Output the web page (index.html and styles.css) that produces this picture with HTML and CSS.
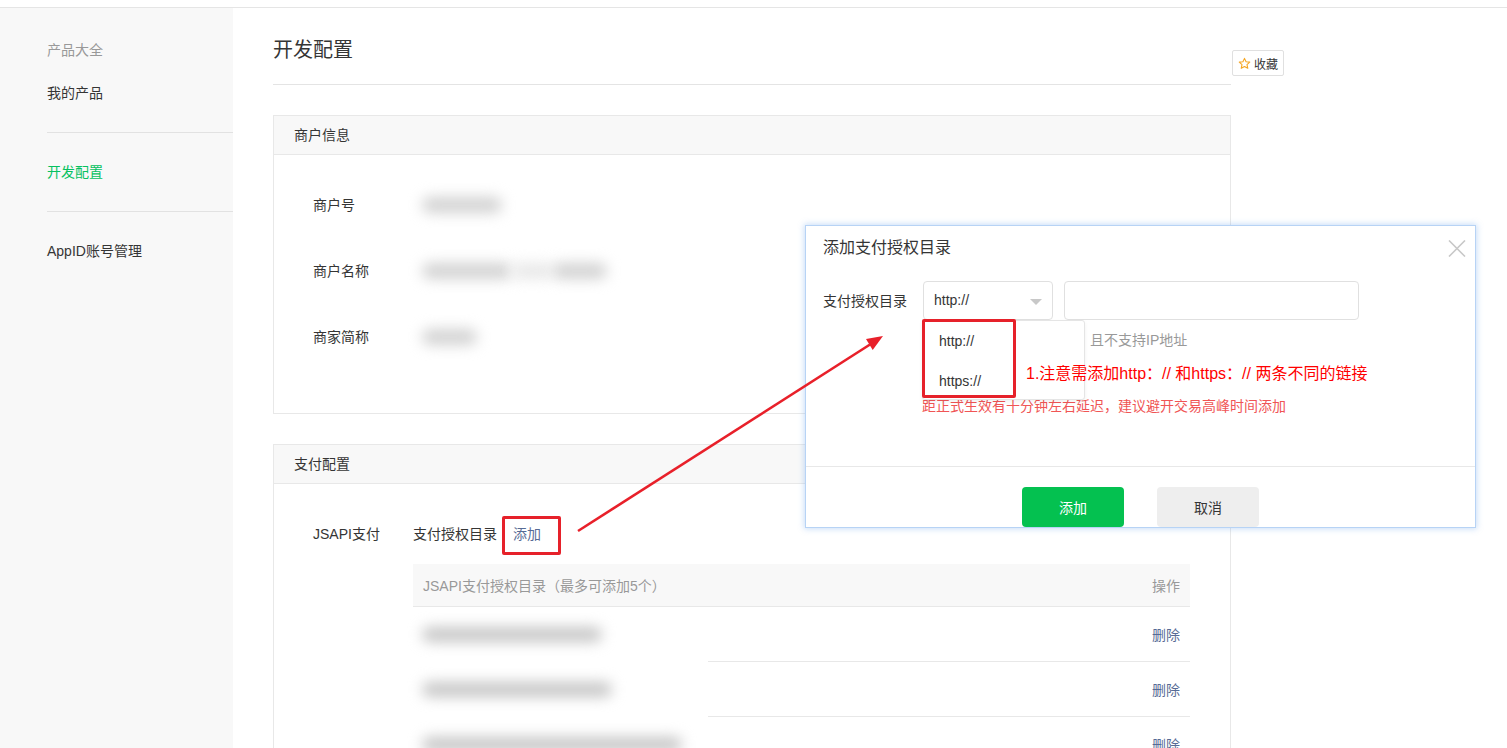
FILE: index.html
```html
<!DOCTYPE html>
<html lang="zh-CN">
<head>
<meta charset="utf-8">
<title>开发配置</title>
<link rel="stylesheet" href="styles.css">
</head>
<body>
<div class="topline"></div>
<div class="page">
  <aside class="sidebar">
    <div class="nav-group first">
      <div class="nav-cat">产品大全</div>
      <div class="nav-item">我的产品</div>
    </div>
    <div class="nav-group">
      <div class="nav-item active">开发配置</div>
    </div>
    <div class="nav-group last">
      <div class="nav-item">AppID账号管理</div>
    </div>
  </aside>
  <main class="main">
    <div class="content">
      <h1 class="page-title">开发配置</h1>
      <section class="card">
        <div class="card-hd">商户信息</div>
        <div class="info-body">
          <div class="info-row">
            <div class="info-label">商户号</div>
            <div class="info-value"><span class="blob w80"></span></div>
          </div>
          <div class="info-row">
            <div class="info-label">商户名称</div>
            <div class="info-value"><span class="blob w90"></span><span class="blob light w40"></span><span class="blob w55"></span></div>
          </div>
          <div class="info-row">
            <div class="info-label">商家简称</div>
            <div class="info-value"><span class="blob w55"></span></div>
          </div>
        </div>
      </section>
      <section class="card">
        <div class="card-hd">支付配置</div>
        <div class="pay-body">
          <div class="pay-label">JSAPI支付</div>
          <div class="pay-main">
            <div class="pay-line">支付授权目录<a class="link add-link">添加</a></div>
            <div class="table">
              <div class="tr th"><span>JSAPI支付授权目录（最多可添加5个）</span><span>操作</span></div>
              <div class="tr"><span></span><a class="link">删除</a></div>
              <div class="tr"><span></span><a class="link">删除</a></div>
              <div class="tr"><span></span><a class="link">删除</a></div>
            </div>
          </div>
        </div>
      </section>
    </div>
    <div class="aside-actions">
      <button class="fav">
        <svg class="star" width="13" height="13" viewBox="0 0 24 24"><path d="M12 2.5l2.9 6.3 6.8.7-5.1 4.6 1.5 6.8L12 17.4l-6.1 3.5 1.5-6.8L2.3 9.5l6.8-.7z" fill="none" stroke="#f5a623" stroke-width="2" stroke-linejoin="round"/></svg>
        <span>收藏</span>
      </button>
    </div>
  </main>
</div>

<div class="redact">
  <div class="redact-row first"><span class="blob dark w180"></span></div>
  <div class="redact-row"><span class="blob dark w190"></span></div>
  <div class="redact-row"><span class="blob dark w260"></span></div>
</div>

<div class="dialog">
  <div class="dlg-body">
    <div class="dlg-title">添加支付授权目录</div>
    <svg class="dlg-close" width="18" height="17" viewBox="0 0 18 17"><path d="M1 0.5L17 16.5M17 0.5L1 16.5" stroke="#c8c8c8" stroke-width="1.6"/></svg>
    <div class="form-row">
      <div class="form-label">支付授权目录</div>
      <div class="select"><span>http://</span><i class="caret"></i></div>
      <div class="input"></div>
    </div>
    <div class="hint">且不支持IP地址</div>
    <div class="warn">距正式生效有十分钟左右延迟，建议避开交易高峰时间添加</div>
    <div class="dropdown">
      <div class="opt">http://</div>
      <div class="opt">https://</div>
    </div>
  </div>
  <div class="dlg-ft">
    <button class="btn btn-primary">添加</button>
    <button class="btn btn-default">取消</button>
  </div>
</div>

<div class="anno-text">1.注意需添加http：// 和https：// 两条不同的链接</div>
<div class="mark mark-add"></div>
<div class="mark mark-opt"></div>
<svg class="arrow" width="1507" height="748" viewBox="0 0 1507 748">
  <line x1="578" y1="531" x2="870" y2="344.5" stroke="#e8202a" stroke-width="2.6"/>
  <polygon points="883,336 872.7,350 866,339" fill="#e8202a"/>
</svg>
</body>
</html>
```

FILE: styles.css
```css
* { box-sizing: border-box; }
html, body { margin: 0; height: 100%; overflow: hidden; background: #fff; }
body {
  font-family: "Liberation Sans", "Noto Sans CJK SC", sans-serif;
  font-size: 14px;
  color: #353535;
  position: relative;
}

.topline { height: 8px; border-bottom: 1px solid #e5e5e5; }

.page { display: flex; height: 740px; }

/* sidebar */
.sidebar { width: 233px; flex: none; background: #f8f8f8; padding-left: 47px; }
.nav-group { padding: 29px 0; border-bottom: 1px solid #e2e2e2; }
.nav-group.first { padding-top: 32px; }
.nav-group.last { border-bottom: 0; }
.nav-cat { line-height: 20px; color: #999; margin-bottom: 23px; }
.nav-item { line-height: 20px; }
.nav-item.active { color: #07c160; }

/* main */
.main { flex: 1; display: flex; padding-left: 40px; }
.content { width: 958px; flex: none; }
.page-title {
  margin: 0;
  padding: 28px 0 20px;
  font-size: 20px;
  font-weight: normal;
  line-height: 28px;
  border-bottom: 1px solid #e4e4e4;
}
.card { margin-top: 30px; border: 1px solid #e8e8e8; }
.card-hd {
  height: 39px;
  line-height: 38px;
  padding-left: 20px;
  background: #f8f8f8;
  border-bottom: 1px solid #e8e8e8;
}
.info-body { padding: 17px 0 43px 39px; }
.info-row { display: flex; align-items: center; height: 66px; }
.info-label { width: 95px; flex: none; line-height: 20px; }
.info-value { display: flex; align-items: center; padding-left: 14px; }

.blob {
  display: inline-block;
  height: 16px;
  border-radius: 8px;
  background: #d2d2d2;
  filter: blur(7px);
}
.blob.light { background: #e8e8e8; }
.blob.dark { background: #c6c6c6; height: 15px; }
.w40 { width: 40px; }
.w55 { width: 55px; }
.w80 { width: 80px; }
.w90 { width: 90px; }
.w180 { width: 180px; }
.w190 { width: 190px; }
.w260 { width: 260px; }

.pay-body { display: flex; padding: 40px 39px 0; }
.pay-label { width: 100px; flex: none; line-height: 20px; }
.pay-main { flex: 1; }
.pay-line { line-height: 20px; }
.link { color: #576b95; text-decoration: none; }
.add-link { margin-left: 16px; }
.table { margin-top: 20px; width: 777px; }
.tr {
  display: flex;
  justify-content: space-between;
  align-items: center;
  height: 55px;
  padding: 0 10px;
  border-bottom: 1px solid #e8e8e8;
}
.tr.th { height: 43px; background: #f8f8f8; color: #999; }

.aside-actions { padding-top: 42px; margin-left: 1px; }
.fav {
  display: flex;
  align-items: center;
  gap: 3px;
  width: 52px;
  height: 26px;
  padding: 0 0 0 5px;
  border: 1px solid #e0e0e0;
  border-radius: 2px;
  background: #fff;
  font-family: inherit;
  font-size: 12px;
  color: #353535;
}

/* redaction patch over the table rows */
.redact {
  position: absolute;
  left: 405px;
  top: 622px;
  width: 303px;
  height: 126px;
  background: #fff;
  padding-left: 17px;
}
.redact-row { height: 55px; display: flex; align-items: center; }
.redact-row.first { margin-top: -15px; }

/* dialog */
.dialog {
  position: absolute;
  left: 805px;
  top: 225px;
  width: 671px;
  height: 303px;
  background: #fff;
  border: 1px solid #b7d3f5;
  box-shadow: 0 0 6px 1px rgba(100, 160, 235, .35);
  overflow: hidden;
}
.dlg-body {
  position: relative;
  height: 241px;
  padding: 10px 17px 0;
  border-bottom: 1px solid #e8e8e8;
}
.dlg-title { font-size: 16px; line-height: 24px; color: #353535; }
.dlg-close { position: absolute; right: 9px; top: 14px; }
.form-row { display: flex; align-items: center; margin-top: 21px; }
.form-label { width: 100px; flex: none; line-height: 20px; }
.select {
  position: relative;
  width: 130px;
  height: 39px;
  border: 1px solid #e0e0e0;
  border-radius: 4px;
  padding-left: 10px;
  line-height: 37px;
}
.caret {
  position: absolute;
  right: 10px;
  top: 17px;
  width: 0;
  height: 0;
  border-top: 6px solid #c8c8c8;
  border-left: 6px solid transparent;
  border-right: 6px solid transparent;
}
.input {
  width: 295px;
  height: 39px;
  margin-left: 11px;
  border: 1px solid #e0e0e0;
  border-radius: 4px;
}
.hint { margin-top: 10px; line-height: 20px; padding-left: 267px; color: #999; }
.warn { margin-top: 46px; line-height: 20px; padding-left: 99px; color: #f05555; }
.dropdown {
  position: absolute;
  left: 116px;
  top: 94px;
  width: 163px;
  height: 80px;
  background: #fff;
  border: 1px solid #e5e5e5;
  border-radius: 3px;
  box-shadow: 0 2px 4px rgba(0, 0, 0, .06);
}
.opt { height: 40px; line-height: 40px; padding-left: 16px; }

.dlg-ft { display: flex; justify-content: center; gap: 33px; padding-top: 20px; }
.btn {
  width: 102px;
  height: 40px;
  border: 0;
  border-radius: 4px;
  font-family: inherit;
  font-size: 14px;
}
.btn-primary { background: #04c150; color: #fff; }
.btn-default { background: #eee; color: #353535; }

/* annotations */
.anno-text {
  position: absolute;
  left: 1026px;
  top: 363px;
  color: #f00;
  font-size: 16px;
  line-height: 22px;
}
.mark { position: absolute; border: 3px solid #e6212a; border-radius: 2px; }
.mark-add { left: 502px; top: 516px; width: 59px; height: 39px; }
.mark-opt { left: 922px; top: 319px; width: 94px; height: 79px; }
.arrow { position: absolute; left: 0; top: 0; pointer-events: none; }
```
